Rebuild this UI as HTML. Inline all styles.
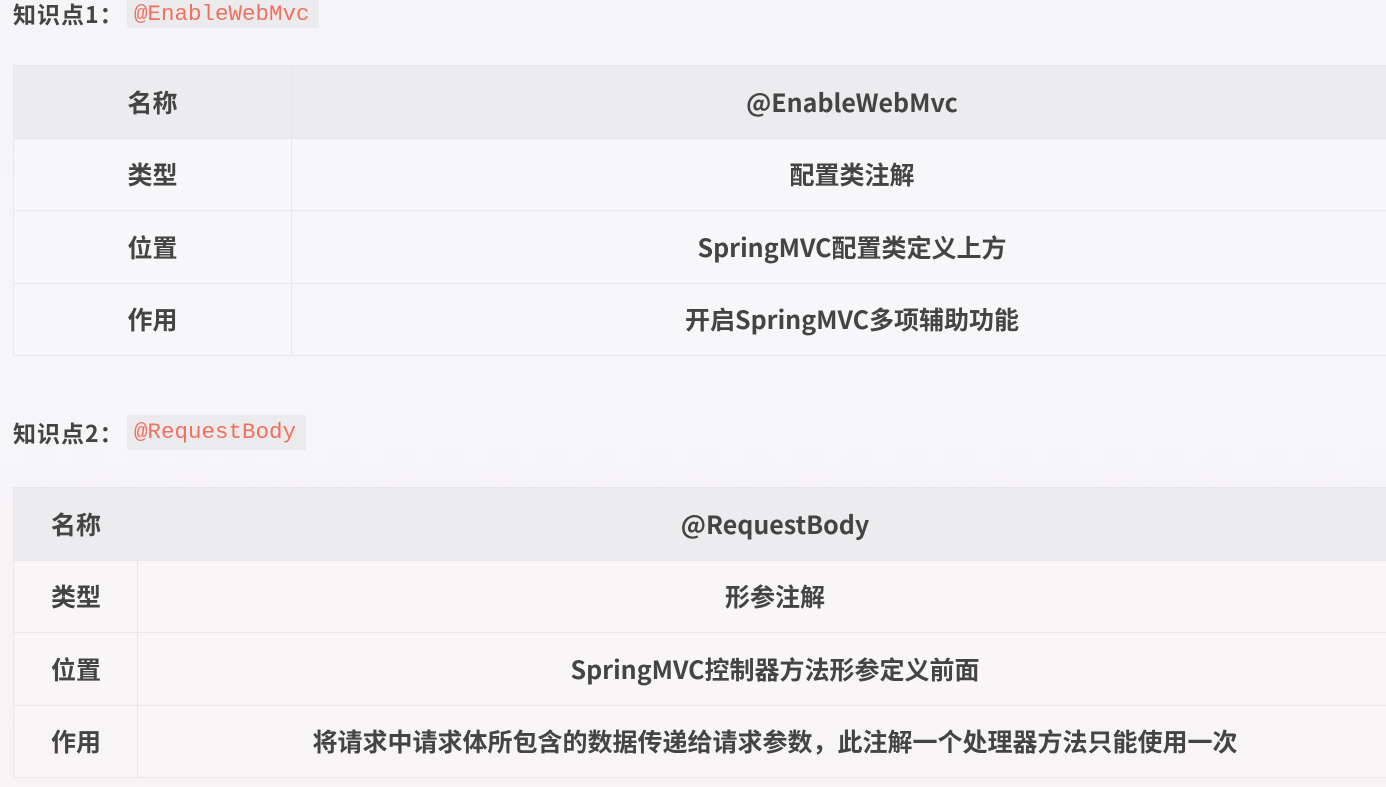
<!DOCTYPE html>
<html><head><meta charset="utf-8"><style>
html,body{margin:0;padding:0}
body{width:1386px;height:787px;overflow:hidden;background:linear-gradient(180deg,#f5f5f7 0%,#f6f5f7 50%,#f8f3f5 100%);font-family:"Liberation Sans","Noto Sans CJK SC",sans-serif;color:#444;position:relative}
.h{position:absolute;left:13px;font-size:23px;font-weight:bold;color:#444;line-height:26px;letter-spacing:1px;font-family:"Noto Sans CJK SC","Liberation Sans",sans-serif}
.code{position:absolute;background:#ebebed;color:#f0705f;font-family:"Liberation Mono",monospace;font-size:22.5px;line-height:28px;padding:0 7px}
table{position:absolute;left:13px;border-collapse:collapse;width:1400px}
td{height:72px;box-sizing:border-box;border:1px solid #e8e8ea;font-size:25px;line-height:28px;font-weight:bold;text-align:center;padding:0;color:#444;font-family:"Noto Sans CJK SC","Liberation Sans",sans-serif}
tr{height:72.5px}
tr:first-child td{background:#ececef}
tr td{background:rgba(248,247,249,0.6)}
.t2 td:first-child{text-align:left;padding-left:37px}
</style></head><body>
<div class="h" style="top:0">知识点1：</div>
<div class="code" style="left:127px;top:0;width:178px">@EnableWebMvc</div>
<table style="top:65px">
<tr><td style="width:278px">名称</td><td>@EnableWebMvc</td></tr>
<tr><td>类型</td><td>配置类注解</td></tr>
<tr><td>位置</td><td>SpringMVC配置类定义上方</td></tr>
<tr><td>作用</td><td>开启SpringMVC多项辅助功能</td></tr>
</table>
<div class="h" style="top:419px">知识点2：</div>
<div class="code" style="left:127px;top:415px;height:35px;line-height:35px;width:165px">@RequestBody</div>
<table class="t2" style="top:487px">
<tr><td style="width:124px;border-right-color:#ececef">名称</td><td>@RequestBody</td></tr>
<tr><td>类型</td><td>形参注解</td></tr>
<tr><td>位置</td><td>SpringMVC控制器方法形参定义前面</td></tr>
<tr><td>作用</td><td>将请求中请求体所包含的数据传递给请求参数，此注解一个处理器方法只能使用一次</td></tr>
</table>
</body></html>
